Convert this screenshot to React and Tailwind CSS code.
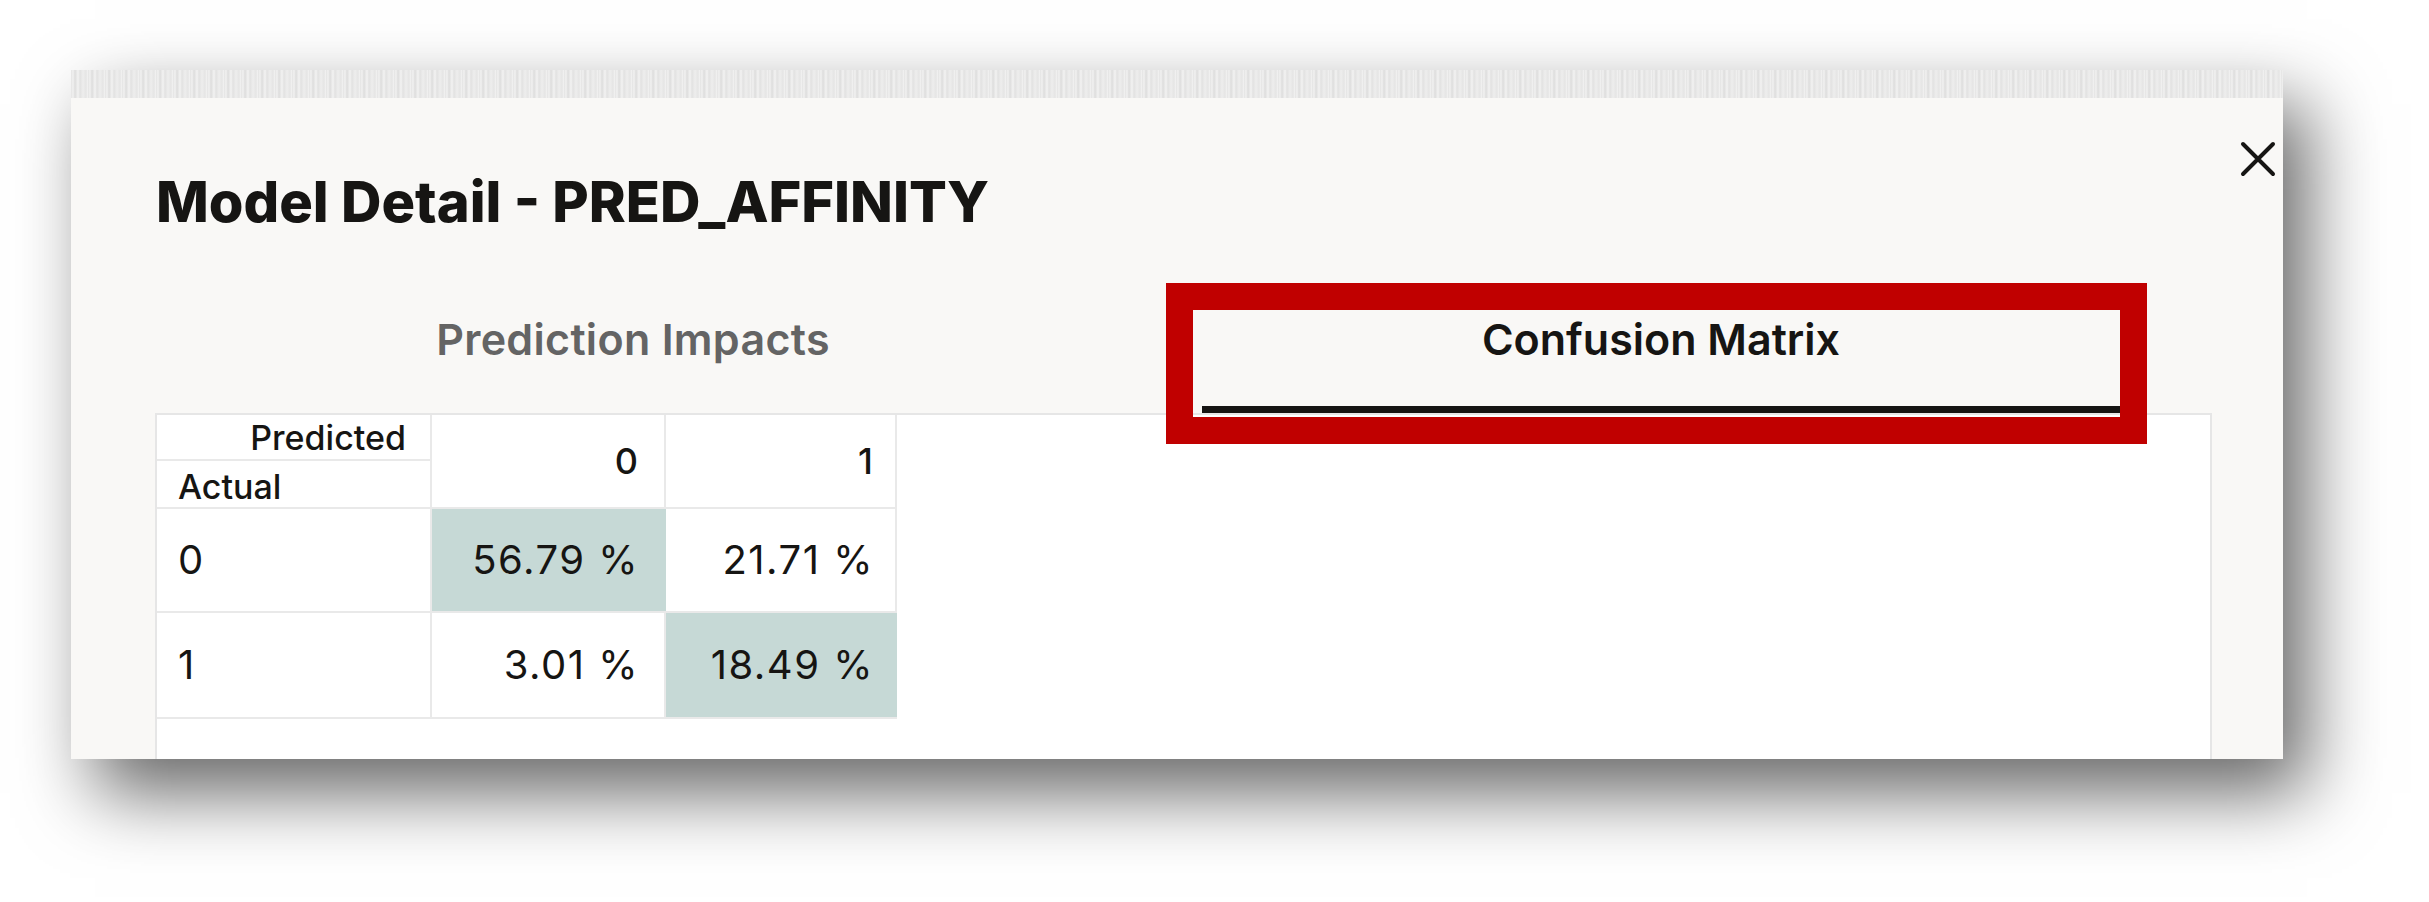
import React, { useState } from 'react';

const cells = [
  { label: '0', values: ['56.79 %', '21.71 %'] },
  { label: '1', values: ['3.01 %', '18.49 %'] },
];

function CloseIcon() {
  return (
    <svg width="38" height="38" viewBox="0 0 38 38" fill="none">
      <path d="M4 4L34 34M34 4L4 34" stroke="#161513" strokeWidth="4" strokeLinecap="round" />
    </svg>
  );
}

export default function App() {
  const [tab, setTab] = useState('matrix');

  return (
    <div className="w-[2429px] h-[902px] bg-white overflow-hidden font-['Inter','Noto_Sans',sans-serif] text-[#161513]">
      <div className="ml-[71px] pt-[70px]">
        {/* Dialog */}
        <div className="relative w-[2212px] h-[689px] bg-[#f9f8f6] flex flex-col shadow-[24px_34px_70px_rgba(0,0,0,0.6)]">
          {/* torn edge */}
          <div className="h-[28px] bg-[repeating-linear-gradient(90deg,#dedede_0px,#efefef_2px,#d6d6d6_4px,#f1f1f1_7px,#dcdcdc_9px,#ebebeb_12px,#e0e0e0_15px,#f2f2f2_17px)] opacity-80" />

          {/* Header */}
          <div className="flex justify-between items-start pl-[85px] pr-[6px]">
            <h1 className="mt-[76px] text-[56px] leading-none font-extrabold">
              Model Detail - PRED_AFFINITY
            </h1>
            <button className="mt-[42px]" aria-label="Close">
              <CloseIcon />
            </button>
          </div>

          {/* Tabs */}
          <div className="flex gap-[110px] ml-[103px] mt-[88px]">
            <button
              onClick={() => setTab('impacts')}
              className={`w-[918px] flex flex-col items-center text-[43px] leading-none font-semibold tracking-[0.3px] ${
                tab === 'impacts' ? 'text-[#161513]' : 'text-[#646464]'
              }`}
            >
              <span>Prediction Impacts</span>
              <span className={`mt-[45px] w-full h-[7px] ${tab === 'impacts' ? 'bg-[#161513]' : 'bg-transparent'}`} />
            </button>
            <button
              onClick={() => setTab('matrix')}
              className={`w-[918px] flex flex-col items-center text-[43px] leading-none font-semibold ${
                tab === 'matrix' ? 'text-[#161513]' : 'text-[#646464]'
              }`}
            >
              <span>Confusion Matrix</span>
              <span className={`mt-[45px] w-full h-[7px] ${tab === 'matrix' ? 'bg-[#161513]' : 'bg-transparent'}`} />
            </button>
          </div>

          {/* Content */}
          <div className="flex-1 ml-[84px] mr-[71px] bg-white border-2 border-b-0 border-[#e6e6e6]">
            <div className="w-[740px]">
              {/* header row */}
              <div className="flex h-[94px] border-b-2 border-[#e9e9e9]">
                <div className="w-[275px] flex flex-col border-r-2 border-[#e9e9e9] text-[34px] font-medium">
                  <div className="h-[46px] flex items-center justify-end pr-[24px] border-b-2 border-[#e9e9e9]">
                    Predicted
                  </div>
                  <div className="flex-1 flex items-center pl-[21px]">Actual</div>
                </div>
                <div className="w-[234px] flex items-center justify-end pr-[26px] border-r-2 border-[#e9e9e9] text-[36px] font-medium">
                  0
                </div>
                <div className="w-[231px] flex items-center justify-end pr-[22px] border-r-2 border-[#e9e9e9] text-[36px] font-medium">
                  1
                </div>
              </div>

              {cells.map((row, r) => (
                <div
                  key={row.label}
                  className={`flex border-b-2 border-[#e9e9e9] text-[40px] ${r === 0 ? 'h-[104px]' : 'h-[106px]'}`}
                >
                  <div className="w-[275px] flex items-center pl-[21px] border-r-2 border-[#e9e9e9]">
                    {row.label}
                  </div>
                  {row.values.map((v, c) => (
                    <div
                      key={c}
                      className={`flex items-center justify-end border-r-2 tracking-[1.5px] ${
                        c === 0 ? 'w-[234px] pr-[25px]' : 'w-[231px] pr-[21px]'
                      } ${r === c ? 'bg-[#c6d9d6] border-[#c6d9d6]' : 'border-[#e9e9e9]'}`}
                    >
                      {v}
                    </div>
                  ))}
                </div>
              ))}
            </div>
          </div>

          {/* highlight annotation */}
          <div className="absolute left-[1095px] top-[213px] w-[981px] h-[161px] border-[27px] border-[#c00000] pointer-events-none" />
        </div>
      </div>
    </div>
  );
}
